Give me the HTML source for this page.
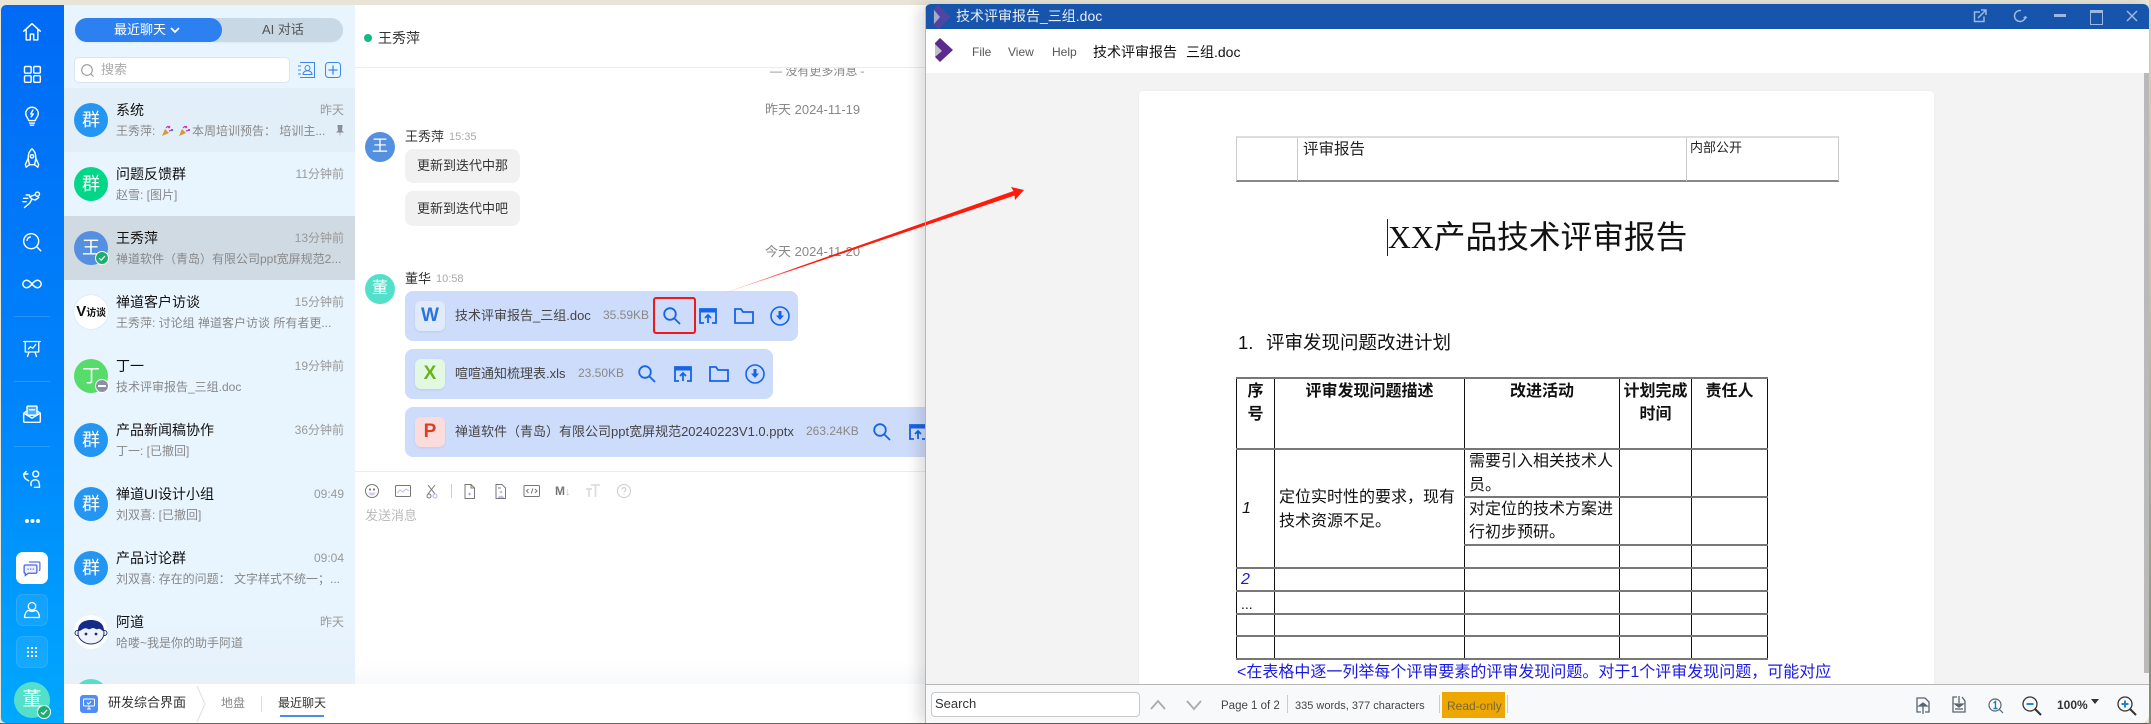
<!DOCTYPE html>
<html lang="zh"><head><meta charset="utf-8"><title>技术评审报告</title>
<style>
html,body{margin:0;padding:0}
body{width:2151px;height:724px;position:relative;overflow:hidden;background:#e8e5d6;font-family:"Liberation Sans","Noto Sans CJK SC",sans-serif}
.a,.t{position:absolute}
.t{white-space:nowrap;line-height:20px;height:20px}
svg{position:absolute;overflow:visible}
.row{position:absolute;left:64px;width:291px;height:64px}
.av{position:absolute;left:10px;top:15px;width:34px;height:34px;border-radius:50%;color:#fff;font-size:18px;line-height:34px;text-align:center}
.nm{position:absolute;left:52px;top:12px;font-size:14px;line-height:20px;color:#111;white-space:nowrap}
.tm{position:absolute;right:11px;top:12px;font-size:12px;line-height:20px;color:#999;white-space:nowrap}
.ms{position:absolute;left:52px;top:33px;font-size:12px;line-height:20px;color:#888;white-space:nowrap}
.card{position:absolute;left:405px;background:#cedcfb;border-radius:8px;height:50px}
.fi{position:absolute;left:10px;top:10px;width:30px;height:30px;border-radius:6px;font:bold 19px/30px "Liberation Sans",sans-serif;text-align:center;box-shadow:0 1px 2px rgba(0,0,0,.08)}
.fn{position:absolute;left:50px;top:15px;font-size:13px;line-height:20px;color:#444;white-space:nowrap}
.sz{position:absolute;top:14px;font-size:12px;line-height:20px;color:#888;white-space:nowrap}
.bub{position:absolute;left:405px;width:115px;background:#f1f1f1;border-radius:8px;font-size:13px;color:#333;text-align:center}
.ln{position:absolute;background:#777}
.vl{position:absolute;background:#111;width:1px;top:378px;height:282px}
.d{position:absolute;font-size:16px;line-height:24px;height:24px;color:#111;white-space:nowrap}
.b{font-weight:700;text-align:center}
.sb{stroke:#fff;fill:none;stroke-width:1.7;stroke-linecap:round;stroke-linejoin:round}
</style></head><body>

<!-- bottom edge strip -->
<div class="a" style="left:0;top:723px;width:2151px;height:1px;background:#66665c"></div>
<div class="a" style="left:2149px;top:0;width:2px;height:724px;background:linear-gradient(#d8d5c0,#c8c6b0 40%,#7f8f78)"></div>

<!-- APP WINDOW -->
<div class="a" style="left:1px;top:5px;width:1000px;height:718px;background:#fff;border-radius:5px 0 0 5px;overflow:hidden"></div>

<!-- sidebar -->
<div class="a" style="left:1px;top:5px;width:63px;height:718px;border-radius:5px 0 0 5px;background:linear-gradient(#006af5,#0084fb 55%,#00a8ff)"></div>
<svg style="left:22px;top:22px" width="20" height="20" viewBox="0 0 24 24" class="sb"><path d="M2 11 12 2l10 9M5 9v12.5h5v-7h4v7h5V9"/></svg>
<svg style="left:22px;top:64px" width="20" height="20" viewBox="0 0 24 24" class="sb"><rect x="3" y="3" width="8" height="8" rx="1.5"/><rect x="14" y="3" width="8" height="8" rx="1.5"/><rect x="3" y="14" width="8" height="8" rx="1.5"/><rect x="14" y="14" width="8" height="8" rx="1.5"/></svg>
<svg style="left:22px;top:106px" width="20" height="20" viewBox="0 0 24 24" class="sb"><path d="M8 17.5c0-2.500-3.500-4-3.500-8.500a7.500 7.500 0 0 1 15 0c0 4.500-3.500 6-3.500 8.500zM9 20.500h6M10 23h4M13 5l-2.500 4.500h3L11 13"/></svg>
<svg style="left:22px;top:148px" width="20" height="20" viewBox="0 0 24 24" class="sb"><path d="M12 1c3.500 3 4.500 6.500 4.500 10 0 3-.7 6-1.500 9H9c-.8-3-1.500-6-1.500-9 0-3.500 1-7 4.500-10zM7.500 12 4 20l1 3 4-3M16.500 12l3.500 8-1 3-4-3"/><circle cx="12" cy="10" r="2"/></svg>
<svg style="left:22px;top:190px" width="20" height="20" viewBox="0 0 24 24" class="sb"><circle cx="18.500" cy="5" r="2.500"/><path d="M15 6 9 8l3 3-3 5-6 5M12 11l4 1 4-3M2 10h5M1 14h4M5 6h4"/></svg>
<svg style="left:22px;top:232px" width="20" height="20" viewBox="0 0 24 24" class="sb"><circle cx="11" cy="11" r="9"/><path d="M18 18l4.500 4.500M6 10a5 5 0 0 1 4-4"/></svg>
<svg style="left:22px;top:274px" width="20" height="20" viewBox="0 0 24 24" class="sb"><path d="M12 12c-2.500-3-4.500-4.500-6.500-4.500a4.500 4.500 0 0 0 0 9c2 0 4-1.500 6.500-4.500s4.500-4.500 6.500-4.500a4.500 4.500 0 0 1 0 9c-2 0-4-1.500-6.500-4.500z"/></svg>
<div class="a" style="left:14px;top:316px;width:36px;height:1px;background:rgba(255,255,255,.16)"></div>
<svg style="left:23px;top:340px" width="18" height="18" viewBox="0 0 24 24" class="sb"><path d="M1 2h22M3 3v13h18V3M8 16l-2 6M16 16l2 6M7 12l3-3 3 2 4-5" /></svg>
<div class="a" style="left:14px;top:381px;width:36px;height:1px;background:rgba(255,255,255,.16)"></div>
<svg style="left:22px;top:404px" width="20" height="20" viewBox="0 0 24 24" class="sb"><path d="M2 11v9.500a1.500 1.500 0 0 0 1.500 1.500h17a1.500 1.500 0 0 0 1.500-1.500V11l-3-2M5 9l-3 2 10 6 10-6"/><rect x="6" y="2.500" width="12" height="11" rx="1" fill="rgba(255,255,255,.3)"/><path d="M9 7h6"/></svg>
<div class="a" style="left:14px;top:446px;width:36px;height:1px;background:rgba(255,255,255,.16)"></div>
<svg style="left:22px;top:469px" width="20" height="20" viewBox="0 0 24 24" class="sb"><circle cx="16.500" cy="6" r="3.500"/><path d="M2 6h5M2 6l3-3M2 6c0 5 3 7 6 8M11 20c-1-3 0-7 5-7 4 0 5 3 5 9h-6"/></svg>
<div class="a" style="left:25px;top:519px;width:4px;height:4px;border-radius:50%;background:#fff;box-shadow:5.500px 0 #fff,11px 0 #fff"></div>
<div class="a" style="left:16px;top:552px;width:32px;height:32px;border-radius:7px;background:#fff"></div>
<svg style="left:23px;top:559px" width="18" height="18" viewBox="0 0 24 24"><path d="M8 4h13a1.500 1.500 0 0 1 1.500 1.500V14a1.500 1.500 0 0 1-1.500 1.500" fill="none" stroke="#5b6fe8" stroke-width="1.700"/><path d="M3 8h14a1.500 1.500 0 0 1 1.500 1.500v8a1.500 1.500 0 0 1-1.500 1.500H7l-4 3v-3a1.500 1.500 0 0 1-1.500-1.500v-8A1.500 1.500 0 0 1 3 8z" fill="#eef0ff" stroke="#4b5fe8" stroke-width="1.700"/><path d="M6 13.500h1.500M9.500 13.500H11M13 13.500h1.500" stroke="#4b5fe8" stroke-width="1.700"/></svg>
<div class="a" style="left:16px;top:594px;width:32px;height:32px;border-radius:7px;background:rgba(255,255,255,.08);box-sizing:border-box;border:1px solid rgba(255,255,255,.1)"></div>
<svg style="left:23px;top:601px" width="18" height="18" viewBox="0 0 24 24" class="sb"><circle cx="12" cy="7" r="5"/><path d="M2 22c0-5 3-9 5-9.500 3 1.500 7 1.500 10 0 2 .5 5 4.500 5 9.500z"/></svg>
<div class="a" style="left:16px;top:636px;width:32px;height:32px;border-radius:7px;background:rgba(255,255,255,.08);box-sizing:border-box;border:1px solid rgba(255,255,255,.1)"></div>
<svg style="left:27px;top:647px" width="10" height="10" viewBox="0 0 10 10" fill="#fff"><rect width="2" height="2"/><rect x="4" width="2" height="2"/><rect x="8" width="2" height="2"/><rect y="4" width="2" height="2"/><rect x="4" y="4" width="2" height="2"/><rect x="8" y="4" width="2" height="2"/><rect y="8" width="2" height="2"/><rect x="4" y="8" width="2" height="2"/><rect x="8" y="8" width="2" height="2"/></svg>
<div class="a" style="left:14px;top:682px;width:36px;height:36px;border-radius:50%;background:#54dfcb;color:#fff;font-size:19px;line-height:36px;text-align:center">董</div>
<div class="a" style="left:37px;top:705px;width:14px;height:14px;border-radius:50%;background:#1cae6e;border:1.500px solid #fff;box-sizing:border-box"></div>
<svg style="left:40px;top:708px" width="8" height="8" viewBox="0 0 8 8" fill="none" stroke="#fff" stroke-width="1.300"><path d="M1 4.200 3.200 6.200 7 2"/></svg>

<!-- chat list -->
<div class="a" style="left:64px;top:5px;width:291px;height:679px;background:linear-gradient(#e8f4fe 90%,#e6f1fa)"></div>
<div class="a" style="left:75px;top:18px;width:268px;height:24px;border-radius:12px;background:#c8d8e5;box-shadow:0 1px 2px rgba(0,0,0,.05)"></div>
<div class="a" style="left:75px;top:18px;width:147px;height:24px;border-radius:12px;background:#2c80ef"></div>
<div class="t" style="left:114px;top:20px;font-size:13px;color:#fff">最近聊天</div>
<svg style="left:170px;top:27px" width="10" height="7" viewBox="0 0 10 7" fill="none" stroke="#fff" stroke-width="1.800"><path d="M1 1l4 4 4-4"/></svg>
<div class="t" style="left:262px;top:20px;font-size:13px;color:#555">AI 对话</div>
<div class="a" style="left:74px;top:57px;width:216px;height:26px;box-sizing:border-box;background:#fff;border:1px solid #dde4ee;border-radius:5px"></div>
<svg style="left:81px;top:64px" width="13" height="13" viewBox="0 0 13 13" fill="none" stroke="#999" stroke-width="1.100"><circle cx="6" cy="6" r="5.300"/><path d="M10 10l2.500 2.500"/></svg>
<div class="t" style="left:101px;top:60px;font-size:13px;color:#aaa">搜索</div>
<svg style="left:298px;top:62px" width="17" height="16" viewBox="0 0 17 16" fill="none" stroke="#3f86ea" stroke-width="1"><path d="M2 .5h14.500v15H2M0 4h3M0 8h3M0 12h3"/><circle cx="9.500" cy="6" r="2.500"/><path d="M5 12.500c0-5 9-5 9 0z"/></svg>
<svg style="left:325px;top:62px" width="16" height="16" viewBox="0 0 16 16" fill="none" stroke="#3f86ea" stroke-width="1"><rect x=".5" y=".5" width="15" height="15" rx="3"/><path d="M8 3.500v9M3.500 8h9" stroke-width="1.300"/></svg>

<div class="row" style="top:88px;background:#e3eff8"><div class="av" style="background:#2495f0">群</div><div class="nm">系统</div><div class="tm">昨天</div><div class="ms">王秀萍:</div><div class="ms" style="left:128px">本周培训预告： 培训主...</div>
<svg style="left:97px;top:37px" width="12" height="12" viewBox="0 0 12 12"><path d="M1 11 4 4l4 4z" fill="#d89a2c"/><circle cx="8" cy="2" r="1.300" fill="#e23ba0"/><circle cx="11" cy="5" r="1.100" fill="#3b6fe2"/><path d="M5 3l2-2M8 6l3-1" stroke="#c03ec8" stroke-width="1.200"/></svg>
<svg style="left:114px;top:37px" width="12" height="12" viewBox="0 0 12 12"><path d="M1 11 4 4l4 4z" fill="#d89a2c"/><circle cx="8" cy="2" r="1.300" fill="#e23ba0"/><circle cx="11" cy="5" r="1.100" fill="#3b6fe2"/><path d="M5 3l2-2M8 6l3-1" stroke="#c03ec8" stroke-width="1.200"/></svg>
<svg style="left:272px;top:37px" width="8" height="12" viewBox="0 0 8 12"><path d="M1.500 0h5v1L6 5.500 8 7.500H4.500L4 12l-.5-4.500H0L2 5.500 1.500 1z" fill="#8a8f96"/></svg></div>
<div class="row" style="top:152px"><div class="av" style="background:#02d788">群</div><div class="nm">问题反馈群</div><div class="tm">11分钟前</div><div class="ms">赵雪: [图片]</div></div>
<div class="row" style="top:216px;background:#d0dae3"><div class="av" style="background:#5590e0">王</div><div class="nm">王秀萍</div><div class="tm">13分钟前</div><div class="ms">禅道软件（青岛）有限公司ppt宽屏规范2...</div>
<div class="a" style="left:31px;top:35px;width:14px;height:14px;border-radius:50%;background:#1cae6e;border:1.500px solid #fff;box-sizing:border-box"></div><svg style="left:34px;top:38px" width="8" height="8" viewBox="0 0 8 8" fill="none" stroke="#fff" stroke-width="1.200"><path d="M1 4.200 3.200 6.200 7 2"/></svg></div>
<div class="row" style="top:280px"><div class="av" style="background:#fff;box-shadow:0 0 0 .5px #cfe2f5;color:#111;font-size:10px;font-weight:700;letter-spacing:-.3px"><span style="font-size:15px;letter-spacing:0">V</span>访谈</div><div class="nm">禅道客户访谈</div><div class="tm">15分钟前</div><div class="ms">王秀萍: 讨论组 禅道客户访谈 所有者更...</div></div>
<div class="row" style="top:344px"><div class="av" style="background:#57dc6c">丁</div><div class="nm">丁一</div><div class="tm">19分钟前</div><div class="ms">技术评审报告_三组.doc</div>
<div class="a" style="left:31px;top:35px;width:14px;height:14px;border-radius:50%;background:#8b90a5;border:1.500px solid #fff;box-sizing:border-box"></div><div class="a" style="left:34px;top:41px;width:8px;height:2px;background:#fff"></div></div>
<div class="row" style="top:408px"><div class="av" style="background:#2495f0">群</div><div class="nm">产品新闻稿协作</div><div class="tm">36分钟前</div><div class="ms">丁一: [已撤回]</div></div>
<div class="row" style="top:472px"><div class="av" style="background:#2495f0">群</div><div class="nm">禅道UI设计小组</div><div class="tm">09:49</div><div class="ms">刘双喜: [已撤回]</div></div>
<div class="row" style="top:536px"><div class="av" style="background:#2495f0">群</div><div class="nm">产品讨论群</div><div class="tm">09:04</div><div class="ms">刘双喜: 存在的问题： 文字样式不统一；...</div></div>
<div class="row" style="top:600px"><div class="av" style="background:#fff"></div>
<svg style="left:10px;top:15px" width="34" height="34" viewBox="0 0 34 34"><circle cx="3.500" cy="18" r="2.500" fill="#fff" stroke="#1b2e78"/><circle cx="30.500" cy="18" r="2.500" fill="#fff" stroke="#1b2e78"/><ellipse cx="17" cy="18" rx="13" ry="11" fill="#eef3fb" stroke="#1b2e78"/><path d="M4 16C4 8 10 5 17 5s13 3 13 11c-3 0-3-3-6-2-2 1-3-1-5-1s-3 2-5 1-3-1-5 0-2 2-5 2z" fill="#152b88"/><circle cx="12" cy="19" r="1.400" fill="#1b2e78"/><circle cx="22" cy="19" r="1.400" fill="#1b2e78"/></svg>
<div class="nm">阿道</div><div class="tm">昨天</div><div class="ms">哈喽~我是你的助手阿道</div></div>
<div class="a" style="left:74px;top:679px;width:34px;height:34px;border-radius:50%;background:#54dfcb"></div>

<!-- chat pane -->
<div class="a" style="left:355px;top:660px;width:600px;height:24px;background:linear-gradient(#fff,#f8f9fc)"></div>
<div class="a" style="left:355px;top:67px;width:600px;height:1px;background:#e8ecf2"></div>
<div class="a" style="left:364px;top:34px;width:8px;height:8px;border-radius:50%;background:#12b981"></div>
<div class="t" style="left:378px;top:28px;font-size:14px;color:#333">王秀萍</div>
<div class="a" style="left:770px;top:68px;width:94px;height:14px;overflow:hidden"><div class="t" style="left:0;top:-7px;font-size:12px;color:#888">— 没有更多消息 —</div></div>
<div class="t" style="left:765px;top:100px;font-size:13px;color:#888">昨天 2024-11-19</div>
<div class="a" style="left:365px;top:132px;width:30px;height:30px;border-radius:50%;background:#5590e0;color:#fff;font-size:16px;line-height:30px;text-align:center">王</div>
<div class="t" style="left:405px;top:127px;font-size:13px;color:#333">王秀萍</div>
<div class="t" style="left:449px;top:127px;font-size:11px;color:#aaa">15:35</div>
<div class="bub" style="top:149px;height:34px;line-height:34px">更新到迭代中那</div>
<div class="bub" style="top:191px;height:35px;line-height:35px">更新到迭代中吧</div>
<div class="t" style="left:765px;top:242px;font-size:13px;color:#888">今天 2024-11-20</div>
<div class="a" style="left:365px;top:274px;width:30px;height:30px;border-radius:50%;background:#54dfcb;color:#fff;font-size:16px;line-height:30px;text-align:center">董</div>
<div class="t" style="left:405px;top:269px;font-size:13px;color:#333">董华</div>
<div class="t" style="left:436px;top:269px;font-size:11px;color:#aaa">10:58</div>

<div class="card" style="top:291px;width:393px"><div class="fi" style="background:#e1eafb;color:#2a74e0">W</div><div class="fn">技术评审报告_三组.doc</div><div class="sz" style="left:198px">35.59KB</div></div>
<div class="a" style="left:653px;top:297px;width:43px;height:37px;box-sizing:border-box;border:2px solid #f01818;border-radius:3px"></div>
<div class="card" style="top:349px;width:368px"><div class="fi" style="background:#e2f8e2;color:#69b31c">X</div><div class="fn">喧喧通知梳理表.xls</div><div class="sz" style="left:173px">23.50KB</div></div>
<div class="card" style="top:407px;width:540px"><div class="fi" style="background:#fbdcdc;color:#d8401f">P</div><div class="fn">禅道软件（青岛）有限公司ppt宽屏规范20240223V1.0.pptx</div><div class="sz" style="left:401px">263.24KB</div></div>

<!-- file action icons -->
<svg style="left:663px;top:307px" width="18" height="18" viewBox="0 0 18 18" fill="none" stroke="#1565e8" stroke-width="1.800"><circle cx="7" cy="7" r="5.800"/><path d="M11.200 11.200 17 17"/></svg>
<svg style="left:699px;top:308px" width="18" height="16" viewBox="0 0 18 16" fill="none" stroke="#1565e8" stroke-width="1.800"><path d="M5 15H1V1h16v14h-4"/><path d="M1 3h16" stroke-width="3"/><path d="M9 15V7M6 10l3-3 3 3"/></svg>
<svg style="left:734px;top:308px" width="20" height="16" viewBox="0 0 20 16" fill="none" stroke="#1565e8" stroke-width="1.800"><path d="M1 15V1h6l2 3h10v11z"/></svg>
<svg style="left:770px;top:306px" width="20" height="20" viewBox="0 0 20 20"><circle cx="10" cy="10" r="9" fill="none" stroke="#1565e8" stroke-width="1.600"/><path d="M8.500 5h3v4.500H14L10 14 6 9.500h2.500z" fill="#1565e8"/></svg>

<svg style="left:638px;top:365px" width="18" height="18" viewBox="0 0 18 18" fill="none" stroke="#1565e8" stroke-width="1.800"><circle cx="7" cy="7" r="5.800"/><path d="M11.200 11.200 17 17"/></svg>
<svg style="left:674px;top:366px" width="18" height="16" viewBox="0 0 18 16" fill="none" stroke="#1565e8" stroke-width="1.800"><path d="M5 15H1V1h16v14h-4"/><path d="M1 3h16" stroke-width="3"/><path d="M9 15V7M6 10l3-3 3 3"/></svg>
<svg style="left:709px;top:366px" width="20" height="16" viewBox="0 0 20 16" fill="none" stroke="#1565e8" stroke-width="1.800"><path d="M1 15V1h6l2 3h10v11z"/></svg>
<svg style="left:745px;top:364px" width="20" height="20" viewBox="0 0 20 20"><circle cx="10" cy="10" r="9" fill="none" stroke="#1565e8" stroke-width="1.600"/><path d="M8.500 5h3v4.500H14L10 14 6 9.500h2.500z" fill="#1565e8"/></svg>

<svg style="left:873px;top:423px" width="18" height="18" viewBox="0 0 18 18" fill="none" stroke="#1565e8" stroke-width="1.800"><circle cx="7" cy="7" r="5.800"/><path d="M11.200 11.200 17 17"/></svg>
<svg style="left:909px;top:424px" width="18" height="16" viewBox="0 0 18 16" fill="none" stroke="#1565e8" stroke-width="1.800"><path d="M5 15H1V1h16v14h-4"/><path d="M1 3h16" stroke-width="3"/><path d="M9 15V7M6 10l3-3 3 3"/></svg>

<!-- input -->
<div class="a" style="left:355px;top:471px;width:600px;height:1px;background:#e6edf4"></div>
<svg style="left:355px;top:480px" width="300" height="22" viewBox="0 0 300 22" fill="none" stroke="#777" stroke-width="1">
<circle cx="17" cy="11" r="6.500"/><circle cx="15" cy="9.500" r=".6" fill="#777"/><circle cx="19" cy="9.500" r=".6" fill="#777"/><path d="M13.500 12.500h7c-.5 4-6.500 4-7 0z" fill="#d8c8f0" stroke="none"/>
<rect x="40.500" y="5.500" width="15" height="11" rx="1"/><path d="M42 13l3-3 3 2 3-3 3 2" stroke="#c8b8e8"/>
<path d="M73 5l7 9M80 5l-7 9"/><circle cx="74" cy="16" r="2"/><circle cx="80" cy="16" r="2" stroke="#c8a8e8"/>
<path d="M96.500 4v14" stroke="#d4c4ec"/>
<path d="M110 4.500h6l3.500 3.500v10.500H110zM116 4.500V8h3.500" /><path d="M113 14h3M114.500 12.500v3" stroke="#b9a4e4"/>
<path d="M141 4.500h6l3.500 3.500v10.500H141z"/><path d="M143 8h3"/><circle cx="146" cy="12" r="1.300" fill="#c8b8e8" stroke="none"/><path d="M143 18c0-3 6-3 6 0z" fill="#c8b8e8" stroke="none"/>
<rect x="169" y="5.500" width="15.500" height="11" rx="1"/><path d="M173.500 9l-2 2 2 2M180 9l2 2-2 2M177.800 8.500l-1.500 5"/>
</svg>
<div class="t" style="left:555px;top:481px;font-size:12px;font-weight:700;color:#777">M<span style="color:#c4b8e4;font-size:11px">↓</span></div>
<svg style="left:586px;top:484px" width="14" height="14" viewBox="0 0 14 14" fill="none" stroke="#ddd" stroke-width="1.800"><path d="M5 1h9M9.500 1v12M0 5h6M3 5v8"/></svg>
<svg style="left:617px;top:484px" width="14" height="14" viewBox="0 0 14 14" fill="none" stroke="#ccc" stroke-width="1"><circle cx="7" cy="7" r="6.500"/><path d="M5 5.500c0-2.500 4-2.500 4 0 0 1.500-2 1.500-2 3M7 10v1"/></svg>
<div class="t" style="left:365px;top:506px;font-size:13px;color:#bbb">发送消息</div>

<!-- bottom bar -->
<div class="a" style="left:64px;top:684px;width:880px;height:39px;background:#fff"></div>
<div class="a" style="left:80px;top:695px;width:18px;height:18px;border-radius:3px;background:#4f8ef7"></div>
<svg style="left:83px;top:698px" width="12" height="12" viewBox="0 0 12 12" fill="none" stroke="#fff" stroke-width="1"><rect x=".5" y="1" width="11" height="7" rx="1"/><path d="M4 11h4M6 8v3M4 4.500l1.500 1.500L8 3.500"/></svg>
<div class="t" style="left:108px;top:693px;font-size:13px;color:#333">研发综合界面</div>
<svg style="left:196px;top:686px" width="10" height="36" viewBox="0 0 10 36" fill="none" stroke="#dde1e6"><path d="M1 0l8 18-8 18"/></svg>
<div class="t" style="left:221px;top:693px;font-size:12px;color:#888">地盘</div>
<div class="a" style="left:261px;top:696px;width:1px;height:16px;background:#ddd"></div>
<div class="t" style="left:278px;top:693px;font-size:12px;color:#333">最近聊天</div>
<div class="a" style="left:280px;top:715px;width:44px;height:2px;background:#4a8bee"></div>

<!-- DOC WINDOW -->
<div class="a" style="left:925px;top:4px;width:1224px;height:719px;background:#f3f3f3;border-radius:6px 6px 8px 0;overflow:hidden;box-shadow:-6px 0 14px rgba(0,0,0,.14)">
 <div class="a" style="left:0;top:0;width:1px;height:719px;background:#b5b5b5;z-index:5"></div>
 <div class="a" style="left:0;top:0;width:1224px;height:25px;background:#1755ac"></div>
 <div class="a" style="left:0;top:25px;width:1224px;height:44px;background:#fff"></div>
 <div class="a" style="left:1219px;top:69px;width:5px;height:600px;background:#b9b9b9"></div>
</div>
<svg style="left:933px;top:5px" width="18" height="24" viewBox="0 0 18 24"><path d="M5 0 18 12 5 24 0 19V5z" fill="#4d46a5"/><path d="M1 5l6 7-6 7z" fill="#a9a9c8"/></svg>
<div class="t" style="left:956px;top:6px;font-size:14px;color:#e6edf7">技术评审报告_三组.doc</div>
<svg style="left:1973px;top:9px" width="14" height="14" viewBox="0 0 14 14" fill="none" stroke="#9db8de" stroke-width="1.500"><path d="M11 7.500V12.500H1.500V3H7M5 9l7.500-7.500M8 1h5v5"/></svg>
<svg style="left:2013px;top:9px" width="14" height="14" viewBox="0 0 14 14" fill="none" stroke="#9db8de" stroke-width="1.500"><path d="M12.500 7A5.500 5.500 0 1 1 8 1.600"/><path d="M10 8h4.500l-2.200 2.500z" fill="#9db8de" stroke="none"/></svg>
<div class="a" style="left:2054px;top:14px;width:12px;height:3px;background:#9db8de"></div>
<div class="a" style="left:2090px;top:10px;width:11px;height:11px;border:1.500px solid #9db8de;border-top-width:3px"></div>
<svg style="left:2126px;top:10px" width="12" height="12" viewBox="0 0 12 12" fill="none" stroke="#9db8de" stroke-width="1.500"><path d="M1 1l10 10M11 1 1 11"/></svg>

<svg style="left:935px;top:38px" width="18" height="24" viewBox="0 0 18 24"><path d="M5 0 18 12 5 24 0 19V5z" fill="#5b2a8c"/><path d="M0 6l7 7-7 6z" fill="#c2c2c6"/></svg>
<div class="t" style="left:972px;top:42px;font-size:12px;color:#555">File</div>
<div class="t" style="left:1008px;top:42px;font-size:12px;color:#555">View</div>
<div class="t" style="left:1052px;top:42px;font-size:12px;color:#555">Help</div>
<div class="t" style="left:1093px;top:42px;font-size:14px;color:#111">技术评审报告<span style="display:inline-block;width:9px"></span>三组.doc</div>

<!-- document page -->
<div class="a" style="left:1139px;top:91px;width:795px;height:593px;background:#fff;border-radius:4px 4px 0 0;box-shadow:0 0 2px rgba(0,0,0,.05);overflow:hidden"></div>

<!-- header table -->
<div class="a" style="left:1236px;top:136px;width:603px;height:2px;background:#ddd"></div>
<div class="a" style="left:1236px;top:180px;width:603px;height:2px;background:#888"></div>
<div class="a" style="left:1236px;top:137px;width:1px;height:44px;background:#ccc"></div>
<div class="a" style="left:1297px;top:137px;width:1px;height:44px;background:#ccc"></div>
<div class="a" style="left:1686px;top:137px;width:1px;height:44px;background:#ccc"></div>
<div class="a" style="left:1838px;top:137px;width:1px;height:44px;background:#ccc"></div>
<div class="t" style="left:1303px;top:140px;font-size:15.500px;color:#222">评审报告</div>
<div class="t" style="left:1690px;top:138px;font-size:13px;color:#222">内部公开</div>

<div class="a" style="left:1387px;top:219px;width:1px;height:37px;background:#222"></div>
<div class="a" style="left:1388px;top:217px;height:40px;line-height:40px;font-size:31.700px;color:#111;white-space:nowrap;font-family:'Liberation Serif','Noto Sans CJK SC',serif">XX<span style="font-family:'Liberation Sans','Noto Sans CJK SC',sans-serif">产品技术评审报告</span></div>
<div class="a" style="left:1238px;top:331px;height:24px;line-height:24px;font-size:18.500px;color:#111;white-space:nowrap">1.</div>
<div class="a" style="left:1266px;top:331px;height:24px;line-height:24px;font-size:18.500px;color:#111;white-space:nowrap">评审发现问题改进计划</div>

<!-- main table lines -->
<div class="vl" style="left:1236px"></div><div class="vl" style="left:1274px"></div><div class="vl" style="left:1464px"></div><div class="vl" style="left:1619px"></div><div class="vl" style="left:1691px"></div><div class="vl" style="left:1767px"></div>
<div class="ln" style="left:1236px;top:377px;width:532px;height:2px"></div>
<div class="ln" style="left:1236px;top:448px;width:532px;height:2px"></div>
<div class="ln" style="left:1464px;top:496px;width:304px;height:2px"></div>
<div class="ln" style="left:1464px;top:544px;width:304px;height:2px"></div>
<div class="ln" style="left:1236px;top:567px;width:532px;height:2px"></div>
<div class="ln" style="left:1236px;top:590px;width:532px;height:2px"></div>
<div class="ln" style="left:1236px;top:613px;width:532px;height:2px"></div>
<div class="ln" style="left:1236px;top:635px;width:532px;height:2px"></div>
<div class="ln" style="left:1236px;top:658px;width:532px;height:2px"></div>

<div class="d b" style="left:1237px;width:37px;top:380px">序</div>
<div class="d b" style="left:1237px;width:37px;top:403px">号</div>
<div class="d b" style="left:1275px;width:189px;top:380px">评审发现问题描述</div>
<div class="d b" style="left:1465px;width:154px;top:380px">改进活动</div>
<div class="d b" style="left:1620px;width:71px;top:380px">计划完成</div>
<div class="d b" style="left:1620px;width:71px;top:403px">时间</div>
<div class="d b" style="left:1692px;width:75px;top:380px">责任人</div>
<div class="d" style="left:1469px;top:450px">需要引入相关技术人</div>
<div class="d" style="left:1469px;top:474px">员。</div>
<div class="d" style="left:1469px;top:498px">对定位的技术方案进</div>
<div class="d" style="left:1469px;top:521px">行初步预研。</div>
<div class="d" style="left:1279px;top:486px">定位实时性的要求，现有</div>
<div class="d" style="left:1279px;top:510px">技术资源不足。</div>
<div class="d" style="left:1242px;top:497px;font-style:italic">1</div>
<div class="d" style="left:1241px;top:568px;font-style:italic;color:#1a1ae0">2</div>
<div class="d" style="left:1241px;top:592px;font-size:14px">...</div>
<div class="d" style="left:1237px;top:661px;color:#1a1ae0">&lt;在表格中逐一列举每个评审要素的评审发现问题。对于1个评审发现问题，可能对应</div>

<!-- status bar -->
<div class="a" style="left:926px;top:684px;width:1223px;height:39px;background:#f8f9fa;border-top:1px solid #b5b5b5;box-sizing:border-box;border-radius:0 0 8px 0"></div>
<div class="a" style="left:931px;top:692px;width:209px;height:25px;box-sizing:border-box;background:#fff;border:1px solid #c8c8c8;border-radius:4px"></div>
<div class="t" style="left:935px;top:694px;font-size:13px;color:#333">Search</div>
<svg style="left:1150px;top:699px" width="16" height="12" viewBox="0 0 16 12" fill="none" stroke="#aaa" stroke-width="1.800"><path d="M1 10l7-8 7 8"/></svg>
<svg style="left:1186px;top:699px" width="16" height="12" viewBox="0 0 16 12" fill="none" stroke="#aaa" stroke-width="1.800"><path d="M1 2l7 8 7-8"/></svg>
<div class="t" style="left:1221px;top:696px;font-size:11.500px;color:#444">Page 1 of 2</div>
<div class="a" style="left:1287px;top:695px;width:1px;height:18px;background:#ccc"></div>
<div class="t" style="left:1295px;top:696px;font-size:11px;color:#444">335 words, 377 characters</div>
<div class="a" style="left:1439px;top:695px;width:1px;height:18px;background:#ccc"></div>
<div class="a" style="left:1442px;top:692px;width:63px;height:26px;background:#eda700"></div>
<div class="t" style="left:1447px;top:696px;font-size:12px;color:#75683a">Read-only</div>
<div class="a" style="left:1507px;top:695px;width:1px;height:18px;background:#ccc"></div>
<svg style="left:1916px;top:697px" width="14" height="18" viewBox="0 0 14 18" fill="none" stroke="#5a6470" stroke-width="1.300"><path d="M5 15H1V1h8l4 4v10H9"/><path d="M3 9l4-3 4 3z" fill="#5a6470"/><path d="M7 9v8"/></svg>
<svg style="left:1952px;top:696px" width="14" height="18" viewBox="0 0 14 18" fill="none" stroke="#5a6470" stroke-width="1.300"><path d="M5 1H1v15h12V5L10 1"/><path d="M7 0v7"/><path d="M3 8h8l-4 3z" fill="#5a6470"/><path d="M3 13h8"/></svg>
<svg style="left:1988px;top:698px" width="16" height="16" viewBox="0 0 16 16" fill="none" stroke="#5a6470" stroke-width="1.200"><circle cx="7" cy="7" r="6"/><path d="M11.500 11.500 15 15"/><path d="M5.500 5 7.500 3.500v7M5.500 10.500h4" stroke="#1b7fb8" stroke-width="1.400"/></svg>
<svg style="left:2022px;top:696px" width="20" height="20" viewBox="0 0 20 20" fill="none" stroke="#333" stroke-width="1.300"><circle cx="8" cy="8" r="7"/><path d="M13 13l6 6" stroke-width="2"/><path d="M4.500 8h7" stroke="#1f86d4" stroke-width="2"/></svg>
<div class="t" style="left:2057px;top:695px;font-size:12px;font-weight:700;color:#333">100%</div>
<svg style="left:2091px;top:699px" width="8" height="5" viewBox="0 0 8 5"><path d="M0 0h8L4 5z" fill="#333"/></svg>
<svg style="left:2117px;top:696px" width="20" height="20" viewBox="0 0 20 20" fill="none" stroke="#333" stroke-width="1.300"><circle cx="8" cy="8" r="7"/><path d="M13 13l6 6" stroke-width="2"/><path d="M4.500 8h7M8 4.500v7" stroke="#1f86d4" stroke-width="2"/></svg>

<!-- red arrow -->
<svg style="left:0;top:0" width="2151" height="724" viewBox="0 0 2151 724"><defs><linearGradient id="g" gradientUnits="userSpaceOnUse" x1="716" y1="296" x2="800" y2="267"><stop offset="0" stop-color="#ff8a8a" stop-opacity=".5"/><stop offset="1" stop-color="#ff1a0a"/></linearGradient></defs><path d="M716 296 1013.500 191 1011 187 1024 190 1015 200 1014.500 195.500 Z" fill="url(#g)"/></svg>
</body></html>
